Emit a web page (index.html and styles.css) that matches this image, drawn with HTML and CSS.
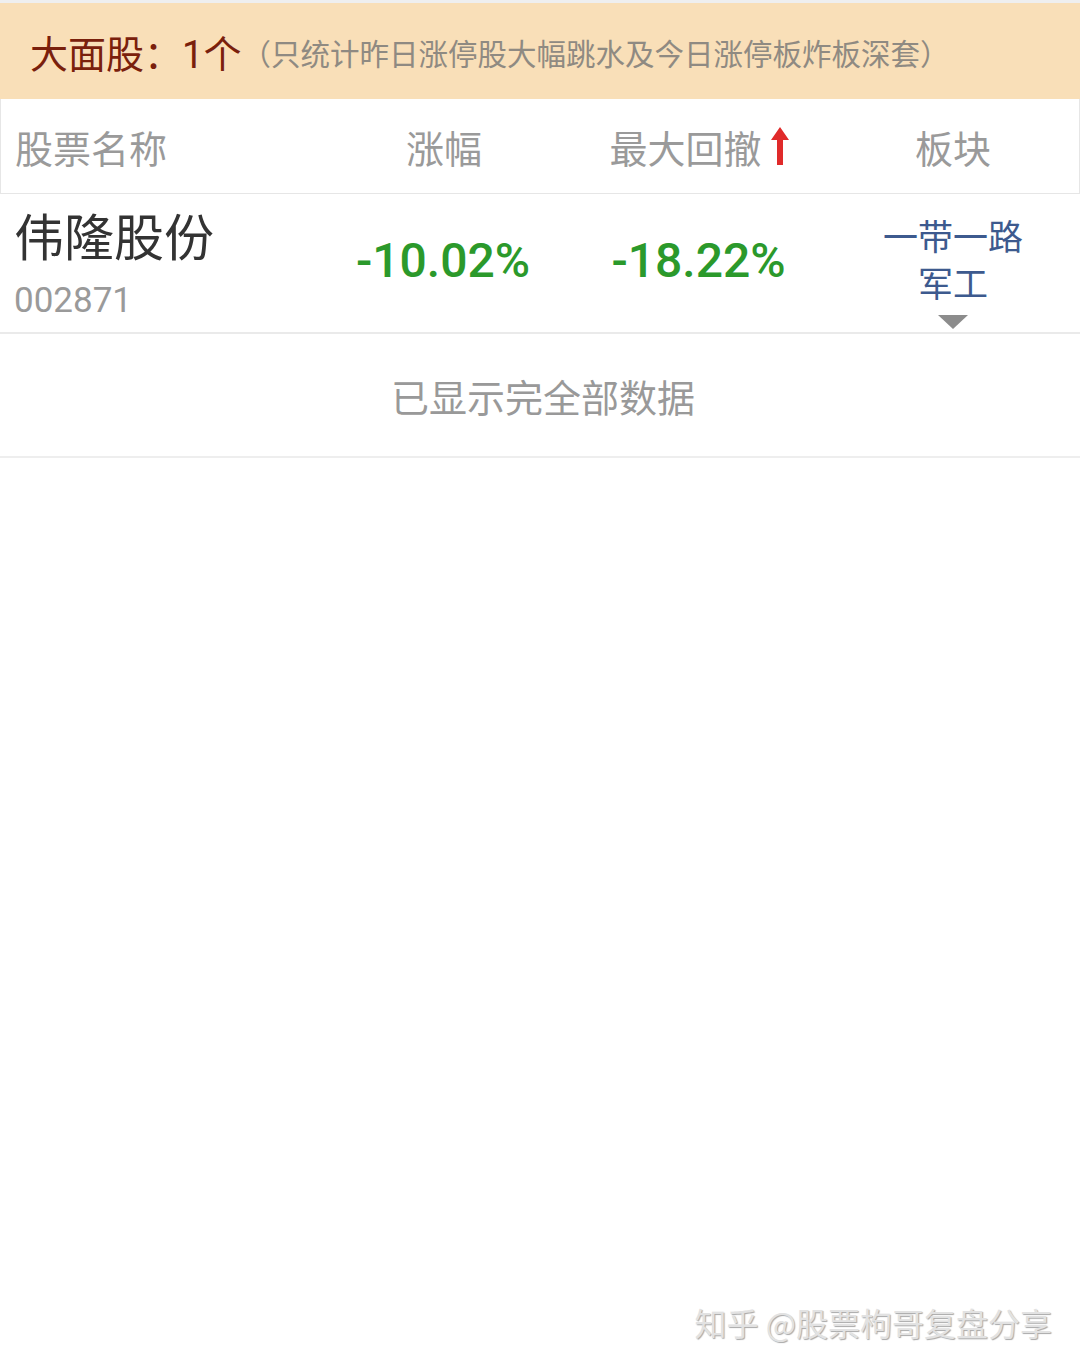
FILE: index.html
```html
<!DOCTYPE html>
<html>
<head>
  <title>大面股</title>
  <link rel="stylesheet" href="styles.css">
</head>
<body>
  <div class="topLine"></div>
  <div class="banner">
    <span class="bannerTitle">大面股：<span class="num">1</span>个</span>
    <span class="bannerNote">（只统计昨日涨停股大幅跳水及今日涨停板炸板深套）</span>
  </div>

  <div class="tableHead">
    <div class="colName">股票名称</div>
    <div class="colMid">涨幅</div>
    <div class="colMid">最大回撤<svg class="sortArrow" width="20" height="38" viewBox="0 0 20 38"><path d="M10 0 L19 13 L13 13 L13 38 L7 38 L7 13 L1 13 Z" fill="#e02a2a"/></svg></div>
    <div class="colMid">板块</div>
  </div>

  <div class="stockRow">
    <div class="colName nameCell">
      <div class="stockName">伟隆股份</div>
      <div class="stockCode">002871</div>
    </div>
    <div class="colMid pct">-10.02%</div>
    <div class="colMid pct">-18.22%</div>
    <div class="colMid sector">
      <div>一带一路</div>
      <div>军工</div>
      <span class="moreArrow"></span>
    </div>
  </div>

  <div class="endNote">已显示完全部数据</div>

  <div class="watermark">知乎 @股票枸哥复盘分享</div>
</body>
</html>
```

FILE: styles.css
```css
body { margin: 0; background: #fff; font-family: "Noto Sans CJK SC", "Noto Sans", sans-serif; position: relative; height: 1369px; overflow: hidden; }
.topLine { height: 3px; background: #efefef; }
.banner { height: 96px; background: #f9dfb8; display: flex; align-items: center; padding-left: 30px; white-space: nowrap; }
.bannerTitle { font-size: 38px; color: #7a200c; }
.bannerTitle .num { font-family: Roboto, sans-serif; }
.bannerNote { font-size: 29.5px; color: #8f8a82; padding-top: 2px; }

.tableHead, .stockRow {
  display: grid;
  grid-template-columns: 315px 256px 255px 1fr;
  align-items: center;
}
.tableHead {
  height: 94px;
  border: 1px solid #e6e6e6;
  border-top: none;
  font-size: 38px;
  color: #9a9a9a;
}
.colName { padding-left: 14px; }
.colMid { text-align: center; display: flex; flex-direction: column; align-items: center; justify-content: center; }
.tableHead .colMid { flex-direction: row; }
.sortArrow { margin-left: 8px; }

.stockRow { height: 138px; border-bottom: 2px solid #eaeaea; }
.nameCell { align-self: start; padding-top: 11px; }
.stockName { font-size: 50px; color: #333; line-height: 58px; }
.stockCode { font-family: Roboto, sans-serif; font-size: 35px; color: #9a9a9a; line-height: 42px; margin-top: 17px; }
.pct { font-family: Roboto, sans-serif; font-weight: 500; font-size: 48px; color: #2b992b; margin-top: -6px; }
.sector { font-size: 35px; color: #3d5a8e; line-height: 47px; padding-top: 14px; }
.moreArrow {
  width: 0; height: 0;
  border-left: 15px solid transparent;
  border-right: 15px solid transparent;
  border-top: 14px solid #8c8c8c;
  margin-top: 10px;
}

.endNote { height: 122px; border-bottom: 2px solid #eeeeee; display: flex; align-items: center; justify-content: center; font-size: 38px; color: #999; padding-left: 6px; }

.watermark {
  position: absolute;
  right: 28px;
  bottom: 24px;
  font-size: 32px;
  color: #e2e2e2;
  text-shadow: 1px 1px 1px #a8a8a8;
}
```
